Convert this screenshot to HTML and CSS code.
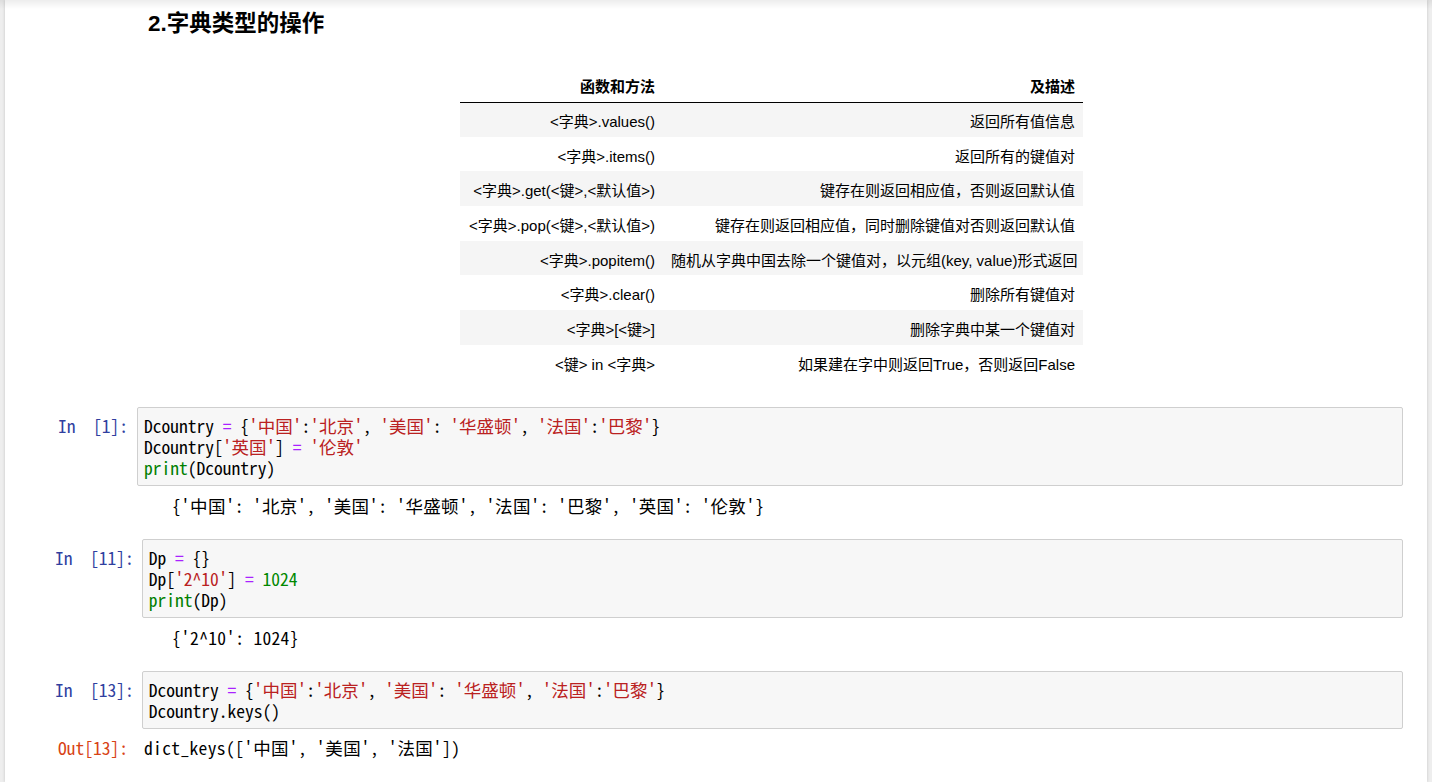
FILE: index.html
```html
<!DOCTYPE html>
<html lang="zh">
<head>
<meta charset="utf-8">
<title>字典类型的操作</title>
<link rel="stylesheet" href="styles.css">
</head>
<body>
<div class="top-shadow"></div>
<div class="notebook">
  <div class="text-cell">
    <h2 class="heading">2.字典类型的操作</h2>
    <table class="ops">
      <colgroup><col class="c1"><col class="c2"></colgroup>
      <thead>
        <tr><th>函数和方法</th><th>及描述</th></tr>
      </thead>
      <tbody>
        <tr><td>&lt;字典&gt;.values()</td><td>返回所有值信息</td></tr>
        <tr><td>&lt;字典&gt;.items()</td><td>返回所有的键值对</td></tr>
        <tr><td>&lt;字典&gt;.get(&lt;键&gt;,&lt;默认值&gt;)</td><td>键存在则返回相应值，否则返回默认值</td></tr>
        <tr><td>&lt;字典&gt;.pop(&lt;键&gt;,&lt;默认值&gt;)</td><td>键存在则返回相应值，同时删除键值对否则返回默认值</td></tr>
        <tr><td>&lt;字典&gt;.popitem()</td><td>随机从字典中国去除一个键值对，以元组(key, value)形式返回</td></tr>
        <tr><td>&lt;字典&gt;.clear()</td><td>删除所有键值对</td></tr>
        <tr><td>&lt;字典&gt;[&lt;键&gt;]</td><td>删除字典中某一个键值对</td></tr>
        <tr><td>&lt;键&gt; in &lt;字典&gt;</td><td>如果建在字中则返回True，否则返回False</td></tr>
      </tbody>
    </table>
  </div>

  <div class="code-cell first">
    <div class="input">
      <div class="prompt in">In&nbsp;&nbsp;[1]:</div>
      <div class="editor"><pre class="code">Dcountry <span class="op">=</span> {<span class="s">'中国'</span>:<span class="s">'北京'</span>, <span class="s">'美国'</span>: <span class="s">'华盛顿'</span>, <span class="s">'法国'</span>:<span class="s">'巴黎'</span>}
Dcountry[<span class="s">'英国'</span>] <span class="op">=</span> <span class="s">'伦敦'</span>
<span class="kw">print</span>(Dcountry)</pre></div>
    </div>
    <pre class="stream">{'中国': '北京', '美国': '华盛顿', '法国': '巴黎', '英国': '伦敦'}</pre>
  </div>

  <div class="code-cell">
    <div class="input">
      <div class="prompt in wide">In&nbsp;&nbsp;[11]:</div>
      <div class="editor"><pre class="code">Dp <span class="op">=</span> {}
Dp[<span class="s">'2^10'</span>] <span class="op">=</span> <span class="num">1024</span>
<span class="kw">print</span>(Dp)</pre></div>
    </div>
    <pre class="stream">{'2^10': 1024}</pre>
  </div>

  <div class="code-cell">
    <div class="input">
      <div class="prompt in wide">In&nbsp;&nbsp;[13]:</div>
      <div class="editor"><pre class="code">Dcountry <span class="op">=</span> {<span class="s">'中国'</span>:<span class="s">'北京'</span>, <span class="s">'美国'</span>: <span class="s">'华盛顿'</span>, <span class="s">'法国'</span>:<span class="s">'巴黎'</span>}
Dcountry.keys()</pre></div>
    </div>
    <div class="result">
      <div class="prompt out">Out[13]:</div>
      <pre class="code spaced">dict_keys(['中国', '美国', '法国'])</pre>
    </div>
  </div>
</div>
</body>
</html>
```
FILE: styles.css
```css
html, body {
  margin: 0;
  padding: 0;
}
body {
  background: #eeeeee;
  overflow: hidden;
  height: 782px;
}
.top-shadow {
  position: absolute;
  left: 0;
  top: 0;
  width: 100%;
  height: 9px;
  background: linear-gradient(to bottom, rgba(0,0,0,0.07), rgba(0,0,0,0));
  z-index: 2;
}
.notebook {
  margin: 0 5px;
  background: #ffffff;
  min-height: 782px;
  box-shadow: 0 0 3px 0 rgba(0,0,0,0.18);
  overflow: hidden;
}
.text-cell {
  padding: 10px 32px 0 143px;
}
.heading {
  margin: 0;
  font-family: "Liberation Sans", "Noto Sans CJK SC", sans-serif;
  font-size: 22.5px;
  line-height: 27px;
  font-weight: bold;
  color: #000;
}
.ops {
  margin: 31px auto 0;
  border-collapse: collapse;
  table-layout: fixed;
  width: 623px;
  font-family: "Liberation Sans", "Noto Sans CJK SC", sans-serif;
  font-size: 15px;
  line-height: 15px;
  color: #000;
}
.ops .c1 { width: 203px; }
.ops .c2 { width: 420px; }
.ops th, .ops td {
  box-sizing: border-box;
  height: 34.7px;
  padding: 4px 8px 0;
  text-align: right;
  white-space: nowrap;
  vertical-align: middle;
}
.ops th {
  font-weight: bold;
  border-bottom: 1px solid #000;
  height: 34px;
}
.ops tbody tr:nth-child(odd) {
  background: #f5f5f5;
}
.code-cell {
  padding-left: 53px;
  padding-right: 24px;
  margin-top: 22.5px;
}
.code-cell.first {
  margin-top: 27px;
}
.input {
  display: flex;
  align-items: flex-start;
  gap: 9px;
}
.prompt, .code, .stream {
  font-family: "Noto Sans Mono CJK SC", "Liberation Mono", "Noto Sans CJK SC", monospace;
  font-size: 17.5px;
  line-height: 21px;
  white-space: pre;
  margin: 0;
}
.prompt {
  flex: none;
  text-align: right;
}
.prompt.in {
  color: #303F9F;
  padding-top: 8px;
}
.prompt.in.wide {
  margin-left: -3px;
  margin-right: -1px;
}
.prompt.out {
  color: #D84315;
}
.editor {
  flex: 1;
  background: #f7f7f7;
  border: 1px solid #cfcfcf;
  border-radius: 2px;
  padding: 7px 6px;
}
.code {
  color: #000;
}
.code.spaced {
  letter-spacing: 0.35px;
}
.s { color: #BA2121; }
.op { color: #AA22FF; }
.kw { color: #008000; }
.num { color: #008800; }
.stream {
  margin-top: 9.5px;
  padding-left: 114px;
  color: #000;
  letter-spacing: 0.3px;
}
.result {
  display: flex;
  gap: 16px;
  margin-top: 8.5px;
}
```
